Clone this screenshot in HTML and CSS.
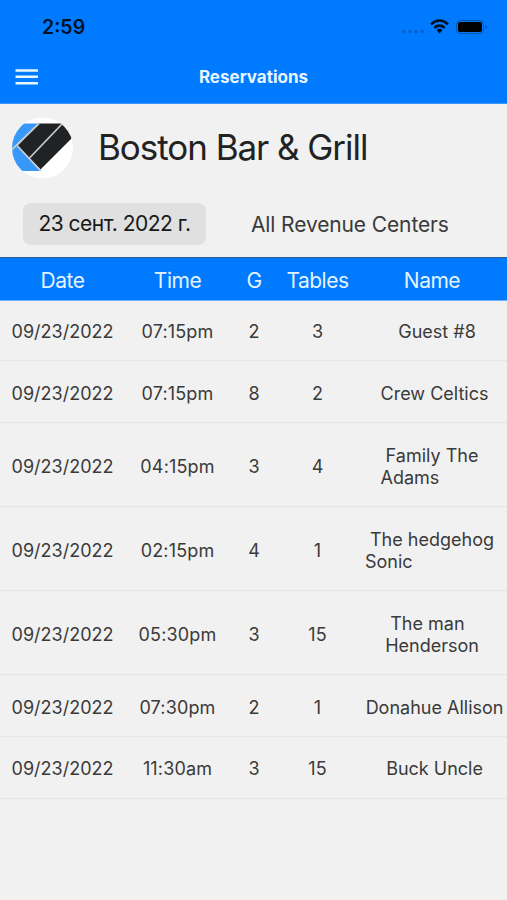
FILE: index.html
```html
<!DOCTYPE html>
<html lang="en">
<head>
<meta charset="utf-8">
<meta name="viewport" content="width=device-width">
<title>Reservations</title>
<link rel="stylesheet" href="styles.css">
</head>
<body>
<header class="top">
  <div class="status">
    <span class="clock">2:59</span>
    <svg class="indicators" width="90" height="24" viewBox="0 0 90 24">
      <g fill="#0762c6"><circle cx="3.5" cy="15.500" r="1.8"/><circle cx="10" cy="15.500" r="1.8"/><circle cx="16" cy="15.500" r="1.8"/><circle cx="22.300" cy="15.500" r="1.8"/></g>
      <g fill="none" stroke="#000e20" stroke-width="2.5"><path d="M31 8.200Q39.500 .9 48 8.200"/><path d="M34.300 11.700Q39.500 7.500 44.700 11.700"/></g>
      <path d="M36.500 14Q39.500 11.700 42.500 14L39.500 17.500Z" fill="#000e20"/>
      <rect x="56.500" y="4.500" width="27" height="13" rx="3.700" fill="none" stroke="#0753a8"/>
      <rect x="58" y="6" width="24" height="10" rx="2" fill="#000"/>
      <path d="M85.300 8.700Q88.300 11 85.300 13.300Z" fill="#0753a8"/>
    </svg>
  </div>
  <nav class="nav">
    <svg class="menu" width="24" height="16" viewBox="0 0 24 16"><path d="M.5 1.500H23M.5 7.800H23M.5 14.200H23" stroke="#e9f6ff" stroke-width="2.500"/></svg>
    <h1 class="title">Reservations</h1>
  </nav>
</header>
<main>
  <section class="venue">
    <svg class="logo" width="62" height="62" viewBox="0 0 62 62">
      <defs><clipPath id="disc"><circle cx="31.500" cy="31" r="30.500"/></clipPath></defs>
      <g clip-path="url(#disc)">
        <rect width="62" height="62" fill="#fff"/>
        <path d="M0 6.500H28L6 29L29 54H0Z" fill="#3798fa"/>
        <path d="M28 6.500H51L62 17V20L29.500 52.500L6.500 29Z" fill="#202223"/>
        <path d="M28 6.500L0 33.500M6.500 29L30 54M51.500 6.500L18.500 41" fill="none" stroke="#c5c9cc" stroke-width="1.800"/>
      </g>
    </svg>
    <h2 class="venue-name">Boston Bar &amp; Grill</h2>
  </section>
  <section class="filters">
    <button class="date">23 сент. 2022 г.</button>
    <span class="center">All Revenue Centers</span>
  </section>
  <section class="table">
    <div class="row head"><span>Date</span><span>Time</span><span>G</span><span>Tables</span><span>Name</span></div>
    <div class="row first"><span>09/23/2022</span><span class="time">07:15pm</span><span>2</span><span>3</span><span><b class="guest">  Guest #8</b></span></div>
    <div class="row"><span>09/23/2022</span><span class="time">07:15pm</span><span>8</span><span>2</span><span><b class="guest"> Crew Celtics</b></span></div>
    <div class="row tall"><span>09/23/2022</span><span class="time">04:15pm</span><span>3</span><span>4</span><span><b class="guest"> Family The 
Adams</b></span></div>
    <div class="row tall"><span>09/23/2022</span><span class="time">02:15pm</span><span>4</span><span>1</span><span><b class="guest"> The hedgehog 
Sonic</b></span></div>
    <div class="row tall"><span>09/23/2022</span><span class="time">05:30pm</span><span>3</span><span>15</span><span><b class="guest"> The man 
Henderson</b></span></div>
    <div class="row"><span>09/23/2022</span><span class="time">07:30pm</span><span>2</span><span>1</span><span><b class="guest"> Donahue Allison</b></span></div>
    <div class="row last"><span>09/23/2022</span><span class="time">11:30am</span><span>3</span><span>15</span><span><b class="guest"> Buck Uncle</b></span></div>
  </section>
</main>
</body>
</html>
```
FILE: styles.css
```css
* { box-sizing: border-box; }
body { margin: 0; height: 900px; overflow: hidden; background: #f1f1f1; color: #3a3a3a; font-family: Inter, "Liberation Sans", sans-serif; }
h1, h2 { margin: 0; }
.top { height: 104px; background: #007aff; border-bottom: 1px solid #3a97fb; }
.status { height: 54px; display: flex; justify-content: space-between; padding: 15px 18px 0 42px; }
.clock { font-size: 19.5px; line-height: 24px; font-weight: 600; color: #001127; }
.indicators { margin-right: -1px; margin-top: 1px; }
.nav { height: 46px; display: grid; grid-template-columns: 54px 1fr 54px; align-items: center; }
.menu { margin-left: 15px; }
.title { text-align: center; color: #e9f6ff; font-size: 17px; font-weight: 700; line-height: 20px; }
.venue { height: 89px; display: flex; align-items: center; padding: 0 0 3px 11px; gap: 25px; }
.logo { margin-top: 1px; }
.venue-name { font-size: 35px; font-weight: 400; line-height: 42px; letter-spacing: -1.05px; color: #222; white-space: nowrap; }
.filters { height: 64px; display: flex; align-items: center; padding: 0 0 1px 23px; gap: 45px; }
.date { width: 183px; height: 42px; margin-top: -2px; padding: 0; border: 0; border-radius: 8px; background: #e0e0e0; color: #181818; font: 400 21px/26px Inter, "Liberation Sans", sans-serif; letter-spacing: -0.5px; white-space: nowrap; }
.center { font-size: 21px; line-height: 26px; letter-spacing: -0.12px; white-space: nowrap; }
.row { height: 62px; padding-top: 4px; display: grid; grid-template-columns: 125px 105px 48px 79px 150px; align-items: center; text-align: center; font-size: 18px; line-height: 22px; border-bottom: 1px solid #e5e5e5; }
.head { height: 44px; padding-top: 3px; background: #007aff; border-top: 1px solid #315f90; border-bottom: 1px solid #69b1fb; color: #e3f3ff; font-size: 21px; letter-spacing: -0.5px; }
.first { height: 60px; padding-top: 3px; }
.last { padding-top: 3px; }
.tall { height: 84px; padding-top: 4px; }
.time { letter-spacing: 0.15px; }
.guest { display: inline-block; font-weight: 400; text-align: left; white-space: pre; }
```
